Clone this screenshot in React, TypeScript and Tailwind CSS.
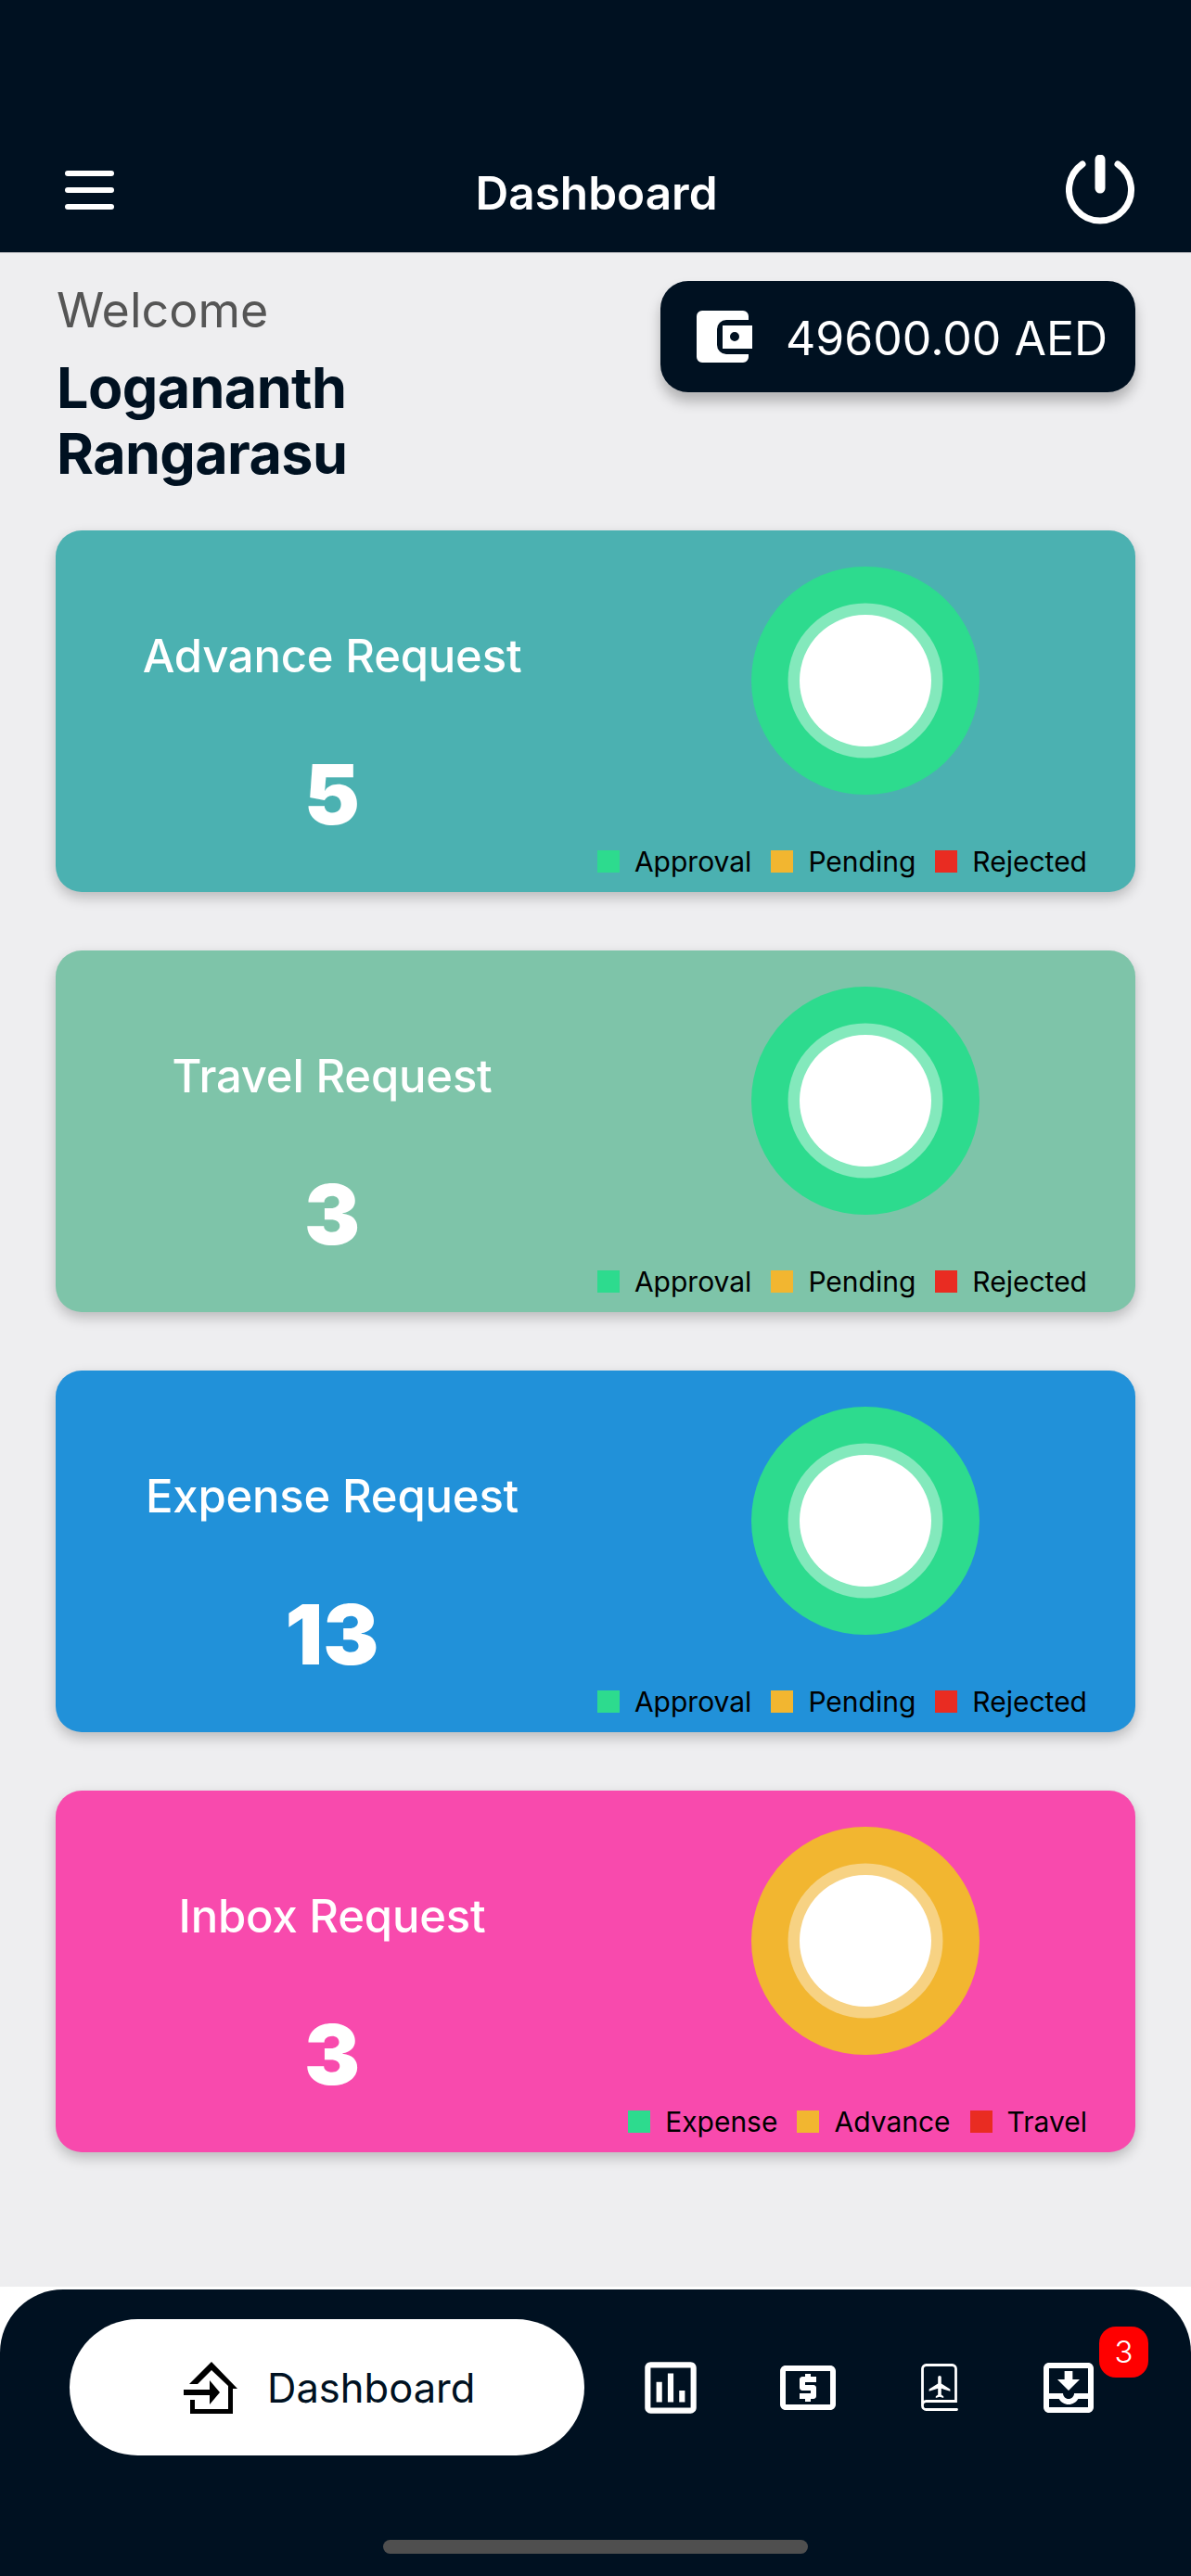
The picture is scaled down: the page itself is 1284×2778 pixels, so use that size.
import { MdOutlineAssessment, MdOutlineLocalAtm, MdOutlineMoveToInbox } from 'react-icons/md';

const cards = [
  { title: 'Advance Request', count: 5, bg: 'bg-[#4bb1b1]', legend: ['Approval', 'Pending', 'Rejected'], main: '#2ddb8e', ring: '#83e9bc' },
  { title: 'Travel Request', count: 3, bg: 'bg-[#7ec4a9]', legend: ['Approval', 'Pending', 'Rejected'], main: '#2ddb8e', ring: '#83e9bc' },
  { title: 'Expense Request', count: 13, bg: 'bg-[#2191d9]', legend: ['Approval', 'Pending', 'Rejected'], main: '#2ddb8e', ring: '#83e9bc' },
  { title: 'Inbox Request', count: 3, bg: 'bg-[#f84aad]', legend: ['Expense', 'Advance', 'Travel'], main: '#f2b630', ring: '#f7d283' },
];

const swatches = ['bg-[#2ddb8e]', 'bg-[#f2b630]', 'bg-[#e92c22]'];

function Donut({ main, ring }: { main: string; ring: string }) {
  return (
    <svg width="246" height="246" viewBox="0 0 246 246">
      <circle cx="123" cy="123" r="123" fill={main} />
      <circle cx="123" cy="123" r="83.5" fill={ring} />
      <circle cx="123" cy="123" r="71" fill="#fff" />
    </svg>
  );
}

function RequestCard({ card }: { card: (typeof cards)[number] }) {
  return (
    <div className={`${card.bg} h-[390px] rounded-[28px] shadow-[0_6px_14px_rgba(0,0,0,0.22)] flex flex-col`}>
      <div className="flex h-[345px]">
        <div className="w-[596px] flex flex-col items-center pt-[106px]">
          <div className="text-white text-[49px] leading-[60px] font-medium tracking-[-0.2px]">{card.title}</div>
          <div className="text-white text-[90px] leading-[100px] font-black mt-[69px]">{card.count}</div>
        </div>
        <div className="pl-[154px] pt-[39px]">
          <Donut main={card.main} ring={card.ring} />
        </div>
      </div>
      <div className="flex justify-end items-center pr-[52px] h-[24px]">
        {card.legend.map((label, i) => (
          <div key={label} className="flex items-center ml-[21px]">
            <div className={`${swatches[i]} w-[24px] h-[24px]`} />
            <span className="text-black text-[30px] leading-[36px] ml-[16px]">{label}</span>
          </div>
        ))}
      </div>
    </div>
  );
}

export default function App() {
  return (
    <div className="h-[2778px] w-[1284px] flex flex-col bg-[#eeeef0] font-['Inter',sans-serif] overflow-hidden">
      <header className="h-[273px] bg-[#001121] border-b border-[#c9c9cc] flex items-end justify-between pl-[70px] pr-[60px] pb-[30px] shrink-0 relative">
        <div className="flex flex-col gap-[12px] mb-[16px]">
          <div className="w-[53px] h-[6px] bg-white rounded-full" />
          <div className="w-[53px] h-[6px] bg-white rounded-full" />
          <div className="w-[53px] h-[6px] bg-white rounded-full" />
        </div>
        <h1 className="text-white text-[49.5px] leading-[60px] font-semibold mb-[4px] ml-[14px]">Dashboard</h1>
        <svg width="75" height="75" viewBox="9 9 75 75" fill="none" stroke="#fff" strokeLinecap="round">
          <path d="M27 19A33.5 33.5 0 1 0 65 19" strokeWidth="7" />
          <path d="M46 14V45" strokeWidth="11" />
        </svg>
      </header>

      <main className="flex-1 px-[60px]">
        <div className="flex justify-between h-[299px]">
          <div className="pl-[1px] pt-[30px]">
            <div className="text-[#555] text-[52px] leading-[64px]">Welcome</div>
            <div className="text-[#001121] text-[61px] leading-[71px] font-bold mt-[16px] w-[400px] tracking-[-0.6px]">Logananth Rangarasu</div>
          </div>
          <div className="mt-[30px] w-[512px] h-[120px] bg-[#001121] rounded-[30px] shadow-[0_10px_14px_rgba(0,0,0,0.25)] flex items-center pl-[39px]">
            <svg width="60" height="56" viewBox="0 0 60 56" fill="#fff" fillRule="evenodd">
              <path d="M6 0H50a6 6 0 0 1 6 6V10H32a10 10 0 0 0-10 10V37a10 10 0 0 0 10 10H56V50a6 6 0 0 1-6 6H6a6 6 0 0 1-6-6V6a6 6 0 0 1 6-6Z" />
              <path d="M28 16H60V41H28ZM41 23a5 5 0 1 0 0 10a5 5 0 1 0 0-10Z" />
            </svg>
            <span className="text-white text-[50px] leading-[60px] ml-[36px] mt-[3px]">49600.00 AED</span>
          </div>
        </div>
        <div className="flex flex-col gap-[63px]">
          {cards.map((card) => (
            <RequestCard key={card.title} card={card} />
          ))}
        </div>
      </main>

      <div className="bg-white pt-[3px] shrink-0">
        <nav className="h-[309px] bg-[#001121] rounded-t-[68px] flex flex-col items-center pt-[32px]">
          <div className="w-full flex items-center pl-[75px] h-[147px]">
            <div className="w-[555px] h-[147px] bg-white rounded-full flex items-center pl-[123px]">
              <svg width="58" height="56" viewBox="8 9 58 56" fill="#000">
                <path d="M38 9L66 38H61V65H15V50H20V60H56V35L38 18L23 33H14Z" />
                <path d="M8 39H36V29L47 42L36 55V45H8Z" />
              </svg>
              <span className="text-[#001121] text-[43.5px] leading-[56px] ml-[32px]">Dashboard</span>
            </div>
            <div className="ml-[56px] text-white">
              <MdOutlineAssessment size={74} />
            </div>
            <div className="ml-[75px] text-white">
              <MdOutlineLocalAtm size={72} />
            </div>
            <div className="ml-[86px]">
              <svg width="40" height="52" viewBox="0 0 40 52" fill="none">
                <path d="M38.5 49.5H5.5a4 4 0 0 1-4-4V5.5a4 4 0 0 1 4-4H33.5a4 4 0 0 1 4 4V40.5H5.5a4 4 0 0 0-4 4" stroke="#fff" strokeWidth="2.8" strokeLinecap="round" />
                <path transform="translate(6.2 10.6) scale(1.2)" fill="#fff" d="M21 16v-2l-8-5V3.5c0-.83-.67-1.5-1.5-1.5S10 2.67 10 3.5V9l-8 5v2l8-2.5V19l-2 1.5V22l3.5-1 3.5 1v-1.5L13 19v-5.5l8 2.5z" />
              </svg>
            </div>
            <div className="ml-[83px] text-white relative">
              <MdOutlineMoveToInbox size={72} />
              <div className="absolute left-[69px] top-[-30px] w-[53px] h-[55px] rounded-[18px] bg-[#ff0000] text-white text-[33px] leading-[55px] font-light text-center">3</div>
            </div>
          </div>
          <div className="w-[458px] h-[15px] mt-[91px] rounded-full bg-[#4f4f4f]" />
        </nav>
      </div>
    </div>
  );
}
